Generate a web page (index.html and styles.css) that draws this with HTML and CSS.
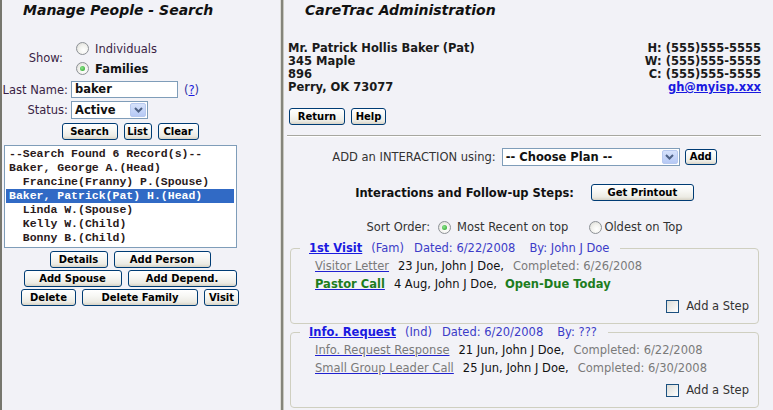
FILE: index.html
```html
<!DOCTYPE html>
<html>
<head>
<meta charset="utf-8">
<title>Manage People - Search</title>
<link rel="stylesheet" href="styles.css">
</head>
<body>
<div class="page">
  <div class="left">
    <h1 class="title">Manage People - Search</h1>
    <div class="form">
      <div class="lbl show-lbl">Show:</div>
      <div class="radios">
        <div class="radio-row"><span class="radio"></span><span class="purple">Individuals</span></div>
        <div class="radio-row"><span class="radio checked"></span><b class="dark">Families</b></div>
      </div>
      <div class="lbl row-name">Last Name:</div>
      <div class="field-row row-name"><div class="textbox">baker</div><span class="help">(<a href="#">?</a>)</span></div>
      <div class="lbl row-status">Status:</div>
      <div class="field-row row-status">
        <div class="selectbox status-select"><span class="sel-text">Active</span><span class="sel-arrow"><svg width="9" height="6" viewBox="0 0 9 6"><path d="M1 1 L4.5 4.5 L8 1" fill="none" stroke="#4d6185" stroke-width="2"/></svg></span></div>
      </div>
    </div>
    <div class="block">
      <div class="btn-row first-row">
        <button class="btn w-search">Search</button>
        <button class="btn w-list">List</button>
        <button class="btn w-clear">Clear</button>
      </div>
      <div class="listbox">
        <div class="item">--Search Found 6 Record(s)--</div>
        <div class="item">Baker, George A.(Head)</div>
        <div class="item">  Francine(Franny) P.(Spouse)</div>
        <div class="item selected">Baker, Patrick(Pat) H.(Head)</div>
        <div class="item">  Linda W.(Spouse)</div>
        <div class="item">  Kelly W.(Child)</div>
        <div class="item">  Bonny B.(Child)</div>
      </div>
      <div class="btn-rows">
        <div class="btn-row">
          <button class="btn w-details">Details</button>
          <button class="btn w-addperson">Add Person</button>
        </div>
        <div class="btn-row">
          <button class="btn w-addspouse">Add Spouse</button>
          <button class="btn w-adddepend">Add Depend.</button>
        </div>
        <div class="btn-row">
          <button class="btn w-delete">Delete</button>
          <button class="btn w-delfamily">Delete Family</button>
          <button class="btn w-visit">Visit</button>
        </div>
      </div>
    </div>
  </div>

  <div class="right">
    <h1 class="title">CareTrac Administration</h1>
    <div class="person">
      <div class="addr">
        <div>Mr. Patrick Hollis Baker (Pat)</div>
        <div>345 Maple</div>
        <div>896</div>
        <div>Perry, OK 73077</div>
      </div>
      <div class="phones">
        <div>H: (555)555-5555</div>
        <div>W: (555)555-5555</div>
        <div>C: (555)555-5555</div>
        <div><a href="#" class="email">gh@myisp.xxx</a></div>
      </div>
    </div>
    <div class="btn-row left-row">
      <button class="btn w-return">Return</button>
      <button class="btn w-help">Help</button>
    </div>
    <div class="rule"></div>
    <div class="center-row add-row">
      <span class="gray">ADD an INTERACTION using:</span>
      <div class="selectbox plan-select"><span class="sel-text">-- Choose Plan --</span><span class="sel-arrow"><svg width="9" height="6" viewBox="0 0 9 6"><path d="M1 1 L4.5 4.5 L8 1" fill="none" stroke="#4d6185" stroke-width="2"/></svg></span></div>
      <button class="btn w-add">Add</button>
    </div>
    <div class="center-row int-row">
      <b class="dark">Interactions and Follow-up Steps:</b>
      <button class="btn w-print">Get Printout</button>
    </div>
    <div class="center-row sort-row">
      <span class="gray">Sort Order:</span>
      <span class="radio checked sort-r1"></span>
      <span class="gray">Most Recent on top</span>
      <span class="radio sort-r2"></span>
      <span class="gray">Oldest on Top</span>
    </div>

    <fieldset class="interaction">
      <legend><a href="#" class="int-name">1st Visit</a><span class="meta m1">(Fam)</span><span class="meta m2">Dated: 6/22/2008</span><span class="meta m3">By: John J Doe</span></legend>
      <div class="step"><a href="#" class="step-link done">Visitor Letter</a><span class="who">23 Jun, John J Doe,</span><span class="completed">Completed: 6/26/2008</span></div>
      <div class="step"><a href="#" class="step-link open">Pastor Call</a><span class="who">4 Aug, John J Doe,</span><span class="due">Open-Due Today</span></div>
      <div class="add-step"><span class="checkbox"></span><span class="gray">Add a Step</span></div>
    </fieldset>

    <fieldset class="interaction">
      <legend><a href="#" class="int-name">Info. Request</a><span class="meta m1">(Ind)</span><span class="meta m2">Dated: 6/20/2008</span><span class="meta m3">By: ???</span></legend>
      <div class="step"><a href="#" class="step-link done">Info. Request Response</a><span class="who">21 Jun, John J Doe,</span><span class="completed">Completed: 6/22/2008</span></div>
      <div class="step"><a href="#" class="step-link done">Small Group Leader Call</a><span class="who">25 Jun, John J Doe,</span><span class="completed">Completed: 6/30/2008</span></div>
      <div class="add-step"><span class="checkbox"></span><span class="gray">Add a Step</span></div>
    </fieldset>
  </div>
</div>
</body>
</html>
```

FILE: styles.css
```css
html, body {
  margin: 0;
  padding: 0;
  background: #f2f2f7;
}
body {
  font-family: "DejaVu Sans", Verdana, sans-serif;
  font-size: 11.5px;
  color: #111;
  width: 773px;
  height: 410px;
  overflow: hidden;
}
.page {
  display: flex;
  height: 410px;
  border-left: 2px solid #77776e;
}
.left {
  width: 278px;
  flex: none;
  border-right: 1px solid #dcdcd8;
}
.right {
  flex: 1;
  border-left: 2px solid #85857b;
  padding: 0 12px 0 5px;
  box-shadow: inset 1px 0 0 #c8c8c0;
}
.title {
  margin: 0;
  font-size: 14px;
  font-style: italic;
  font-weight: bold;
  line-height: 20px;
  color: #111;
}
.left .title { padding-left: 21px; }
.right .title { padding-left: 17px; }

.purple { color: #3a1f45; }
.dark { color: #111; }
.gray { color: #333; }

/* left form */
.form {
  display: grid;
  grid-template-columns: 66px auto;
  column-gap: 3px;
  margin-top: 18px;
}
.lbl {
  text-align: right;
  color: #3a1f45;
  display: flex;
  align-items: center;
  justify-content: flex-end;
}
.show-lbl { padding-right: 5px; }
.radios { display: flex; flex-direction: column; }
.radio-row {
  height: 20px;
  display: flex;
  align-items: center;
  gap: 6px;
  padding-left: 5px;
  padding-top: 1px;
  box-sizing: border-box;
}
.radio {
  width: 13px;
  height: 13px;
  box-sizing: border-box;
  border-radius: 50%;
  border: 1px solid #8d9196;
  background: radial-gradient(circle at 60% 65%, #ffffff 0%, #f3f3ef 45%, #d6d6d0 100%);
  display: inline-flex;
  align-items: center;
  justify-content: center;
  flex: none;
}
.radio.checked::after {
  content: "";
  width: 5px;
  height: 5px;
  border-radius: 50%;
  background: radial-gradient(circle at 40% 40%, #8de38d, #21a121);
}
.row-name { margin-top: 3px; height: 17px; }
.row-status { margin-top: 3px; height: 18px; }
.field-row { display: flex; align-items: center; gap: 6px; }
.textbox {
  width: 107px;
  height: 17px;
  box-sizing: border-box;
  border: 1px solid #7f9db9;
  background: #fff;
  font-weight: bold;
  padding-left: 3px;
  line-height: 15px;
}
.help { color: #3030a0; }
.help a { color: #1a1ae0; }

.selectbox {
  display: flex;
  align-items: stretch;
  box-sizing: border-box;
  border: 1px solid #7f9db9;
  background: #fff;
  font-weight: bold;
  height: 18px;
}
.sel-text {
  flex: 1;
  padding-left: 3px;
  line-height: 16px;
  white-space: nowrap;
  overflow: hidden;
}
.sel-arrow {
  width: 16px;
  margin: 1px;
  box-sizing: border-box;
  border: 1px solid #b7c9ef;
  border-radius: 2px;
  background: linear-gradient(#d6e2fb, #b6c9f5);
  display: flex;
  align-items: center;
  justify-content: center;
}
.status-select { width: 77px; }
.plan-select { width: 178px; }

/* buttons */
.btn {
  height: 17px;
  box-sizing: border-box;
  border: 1px solid #003c74;
  border-radius: 3px;
  background: linear-gradient(#ffffff 0%, #f7f7f4 40%, #ecebe4 80%, #d7d3c6 100%);
  font-family: "DejaVu Sans", Verdana, sans-serif;
  font-size: 10px;
  font-weight: bold;
  color: #000;
  padding: 0;
  margin: 0;
  line-height: 14px;
  flex: none;
}
.w-search { width: 56px; }
.w-list { width: 28px; }
.w-clear { width: 41px; }
.w-details { width: 58px; }
.w-addperson { width: 97px; }
.w-addspouse { width: 98px; }
.w-adddepend { width: 109px; }
.w-delete { width: 55px; }
.w-delfamily { width: 116px; }
.w-visit { width: 35px; }
.w-return { width: 56px; }
.w-help { width: 35px; }
.w-add { width: 32px; height: 16px; }
.w-print { width: 103px; }

.block {
  margin-left: 2px;
  width: 252px;
}
.btn-row {
  display: flex;
  justify-content: center;
  gap: 6px;
}
.first-row { margin-top: 4px; }
.btn-rows {
  display: flex;
  flex-direction: column;
  gap: 2px;
  margin-top: 3px;
}

.listbox {
  margin-top: 5px;
  width: 233px;
  height: 103px;
  box-sizing: border-box;
  border: 1px solid #7f9db9;
  background: #fff;
  padding: 1px 2px 0 1px;
  font-family: "Liberation Mono", "Courier New", monospace;
  font-size: 11.5px;
  font-weight: bold;
  color: #2a1a1a;
}
.item {
  white-space: pre;
  height: 14px;
  line-height: 14px;
  padding-left: 3px;
}
.item.selected {
  background: #316ac5;
  color: #fff;
}

/* right */
.person {
  display: flex;
  justify-content: space-between;
  margin-top: 22px;
  font-weight: bold;
  line-height: 13px;
  color: #1a1a1a;
}
.phones { text-align: right; }
.email { color: #1a1ae0; }
.left-row {
  justify-content: flex-start;
  gap: 6px;
  margin-top: 14px;
  padding-left: 1px;
}
.rule {
  margin: 10px 0 0 -1px;
  border-top: 1px solid #a7a7a0;
  border-bottom: 1px solid #ffffff;
}
.center-row {
  display: flex;
  align-items: center;
  justify-content: center;
}
.add-row {
  margin-top: 11px;
  height: 18px;
  gap: 6px;
}
.add-row .w-add { margin-left: -1px; align-self: flex-start; margin-top: 1px; }
.int-row {
  margin-top: 18px;
  height: 17px;
  gap: 17px;
}
.sort-row {
  margin-top: 19px;
  height: 14px;
}
.sort-r1 { margin: 0 6px 0 8px; }
.sort-r2 { margin: 0 2px 0 21px; }

.interaction {
  margin: 7px 2px 0 2px;
  padding: 2px 9px 8px 9px;
  border: 1px solid #cfcfc0;
  border-radius: 4px;
  min-width: 0;
}
.interaction + .interaction { margin-top: 1px; }
.interaction legend {
  padding: 0 11px 0 9px;
  line-height: 14px;
  white-space: nowrap;
}
.int-name {
  color: #1a1ae0;
  font-weight: bold;
}
.meta { color: #3c3cc8; }
.m1 { margin-left: 9px; }
.m2 { margin-left: 10px; }
.m3 { margin-left: 14px; }
.step {
  padding-left: 15px;
  height: 18px;
  line-height: 18px;
  white-space: nowrap;
}
.step-link {
  text-decoration-color: #2020d0;
}
.step-link.done { color: #7a7a7a; }
.step-link.open { color: #1d7d1d; font-weight: bold; }
.who { margin-left: 9px; color: #111; }
.completed { margin-left: 9px; color: #7a7a7a; }
.due { margin-left: 8px; color: #1d7d1d; font-weight: bold; }
.add-step {
  margin-top: 4px;
  height: 18px;
  display: flex;
  justify-content: flex-end;
  align-items: center;
  gap: 7px;
}
.checkbox {
  width: 13px;
  height: 13px;
  box-sizing: border-box;
  border: 1px solid #1c5180;
  background: linear-gradient(135deg, #dcdcd7, #ffffff);
}
```
